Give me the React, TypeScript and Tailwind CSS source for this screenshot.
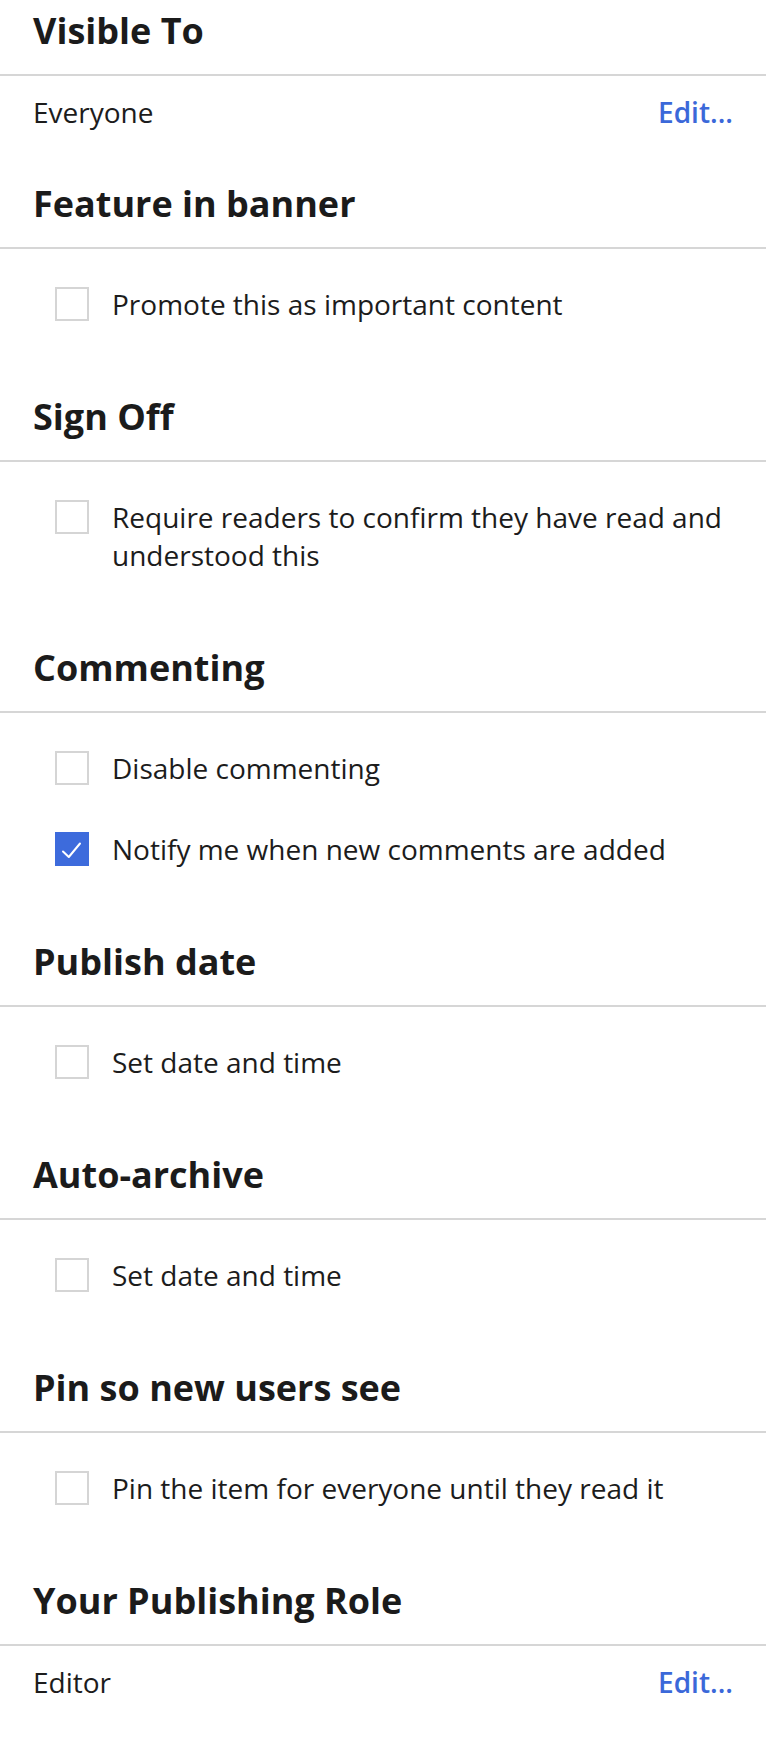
import { useState } from "react";

type CheckItem = { id: string; label: string; checked?: boolean };

type Section =
  | { kind: "value"; title: string; value: string }
  | { kind: "checks"; title: string; items: CheckItem[] };

const SECTIONS: Section[] = [
  { kind: "value", title: "Visible To", value: "Everyone" },
  {
    kind: "checks",
    title: "Feature in banner",
    items: [{ id: "promote", label: "Promote this as important content" }],
  },
  {
    kind: "checks",
    title: "Sign Off",
    items: [{ id: "signoff", label: "Require readers to confirm they have read and understood this" }],
  },
  {
    kind: "checks",
    title: "Commenting",
    items: [
      { id: "disable", label: "Disable commenting" },
      { id: "notify", label: "Notify me when new comments are added", checked: true },
    ],
  },
  {
    kind: "checks",
    title: "Publish date",
    items: [{ id: "publish", label: "Set date and time" }],
  },
  {
    kind: "checks",
    title: "Auto-archive",
    items: [{ id: "archive", label: "Set date and time" }],
  },
  {
    kind: "checks",
    title: "Pin so new users see",
    items: [{ id: "pin", label: "Pin the item for everyone until they read it" }],
  },
  { kind: "value", title: "Your Publishing Role", value: "Editor" },
];

function Checkbox({ checked, onToggle }: { checked: boolean; onToggle: () => void }) {
  return (
    <button
      type="button"
      onClick={onToggle}
      className={
        checked
          ? "mt-[2px] flex h-[34px] w-[34px] shrink-0 items-center justify-center bg-[#3d6bdc]"
          : "mt-[2px] h-[34px] w-[34px] shrink-0 border-2 border-[#d5d5d5] bg-white"
      }
    >
      {checked && (
        <svg width="34" height="34" viewBox="0 0 34 34" fill="none">
          <path d="M8 19.5 L13.8 25 L25 11.5" stroke="white" strokeWidth="2" strokeLinecap="round" strokeLinejoin="round" />
        </svg>
      )}
    </button>
  );
}

function SectionHeading({ title }: { title: string }) {
  return (
    <div className="border-b-2 border-[#d6d6d6] px-[33px] pt-[7px] pb-[19px]">
      <h2 className="text-[36px] font-bold leading-[48px] text-[#1b1b1b]">{title}</h2>
    </div>
  );
}

export default function App() {
  const [checked, setChecked] = useState<Record<string, boolean>>(() => {
    const init: Record<string, boolean> = {};
    SECTIONS.forEach((s) => {
      if (s.kind === "checks") s.items.forEach((i) => (init[i.id] = !!i.checked));
    });
    return init;
  });

  return (
    <div className="min-h-[1750px] w-full bg-white text-[#1c1c1c]" style={{ fontFamily: '"Open Sans", "Noto Sans", sans-serif' }}>
      {SECTIONS.map((section) => (
        <section key={section.title}>
          <SectionHeading title={section.title} />
          {section.kind === "value" ? (
            <div className="flex items-center justify-between px-[33px] pt-[17px] pb-[42px] text-[28px] leading-[38px]">
              <span>{section.value}</span>
              <button type="button" className="font-semibold text-[#3b68d9]">
                Edit...
              </button>
            </div>
          ) : (
            <div className="flex flex-col gap-[43px] pt-[36px] pr-[33px] pb-[63px] pl-[55px]">
              {section.items.map((item) => (
                <label key={item.id} className="flex items-start gap-[23px] text-[28px] leading-[38px]">
                  <Checkbox
                    checked={checked[item.id]}
                    onToggle={() => setChecked((c) => ({ ...c, [item.id]: !c[item.id] }))}
                  />
                  <span>{item.label}</span>
                </label>
              ))}
            </div>
          )}
        </section>
      ))}
    </div>
  );
}
